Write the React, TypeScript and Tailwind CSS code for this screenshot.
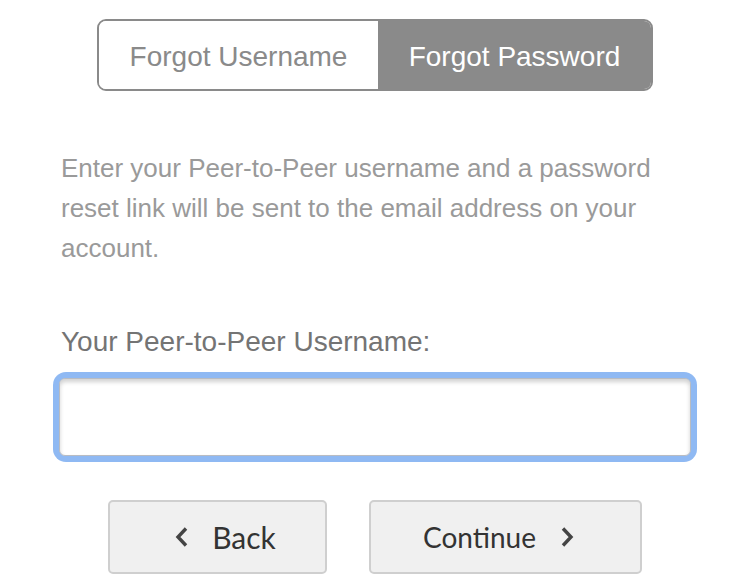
import { useState } from 'react';

function Chevron({ dir }: { dir: 'left' | 'right' }) {
  return (
    <svg width="14" height="22" viewBox="0 0 14 22" className="shrink-0">
      <path
        d={dir === 'left' ? 'M11 2.5 L3 11 L11 19.5' : 'M3 2.5 L11 11 L3 19.5'}
        fill="none"
        stroke="#444"
        strokeWidth="3.4"
        strokeLinecap="butt"
        strokeLinejoin="miter"
      />
    </svg>
  );
}

export default function App() {
  const [mode, setMode] = useState<'username' | 'password'>('password');
  const [value, setValue] = useState('');

  return (
    <div className="w-[750px] h-[588px] bg-white flex flex-col items-center overflow-hidden font-['Liberation_Sans',Arial,sans-serif]">
      {/* Mode toggle */}
      <div className="mt-[19px] w-[556px] h-[72px] flex border-2 border-[#8a8a8a] rounded-[9px] overflow-hidden">
        <button
          onClick={() => setMode('username')}
          className={`w-[279px] h-full pt-[4px] text-[28px] ${
            mode === 'username' ? 'bg-[#8a8a8a] text-white' : 'bg-white text-[#8a8a8a]'
          }`}
        >
          Forgot Username
        </button>
        <button
          onClick={() => setMode('password')}
          className={`flex-1 h-full pt-[4px] text-[28px] ${
            mode === 'password' ? 'bg-[#8a8a8a] text-white' : 'bg-white text-[#8a8a8a]'
          }`}
        >
          Forgot Password
        </button>
      </div>

      {/* Body */}
      <div className="w-full px-[61px] pt-[57px]">
        <p className="text-[26px] leading-[40px] text-[#9a9a9a] pr-[4px]">
          Enter your Peer-to-Peer username and a password reset link will be sent to the email
          address on your account.
        </p>

        <label className="block mt-[59px] text-[28px] leading-[30px] text-[#747474]">
          Your Peer-to-Peer Username:
        </label>

        <div className="-mx-[8px] mt-[15px] h-[90px] rounded-[13px] bg-[#8fb9f3] p-[6px]">
          <input
            value={value}
            onChange={(e) => setValue(e.target.value)}
            className="w-full h-full rounded-[6px] border border-[#b9bcc2] bg-white shadow-[inset_0_3px_4px_rgba(0,0,0,0.18)] outline-none px-3 text-[26px]"
          />
        </div>
      </div>

      {/* Actions */}
      <div className="mt-[38px] flex gap-[42px] font-['Lato',sans-serif]">
        <button className="w-[219px] h-[74px] flex items-center justify-center gap-[23px] bg-[#f0f0f0] border-2 border-[#cfcfcf] rounded-[5px] text-[30px] text-[#333] pl-[16px]">
          <Chevron dir="left" />
          <span>Back</span>
        </button>
        <button className="w-[273px] h-[74px] flex items-center justify-center gap-[24px] bg-[#f0f0f0] border-2 border-[#cfcfcf] rounded-[5px] text-[28px] text-[#333] pr-[14px]">
          <span>Continue</span>
          <Chevron dir="right" />
        </button>
      </div>
    </div>
  );
}
